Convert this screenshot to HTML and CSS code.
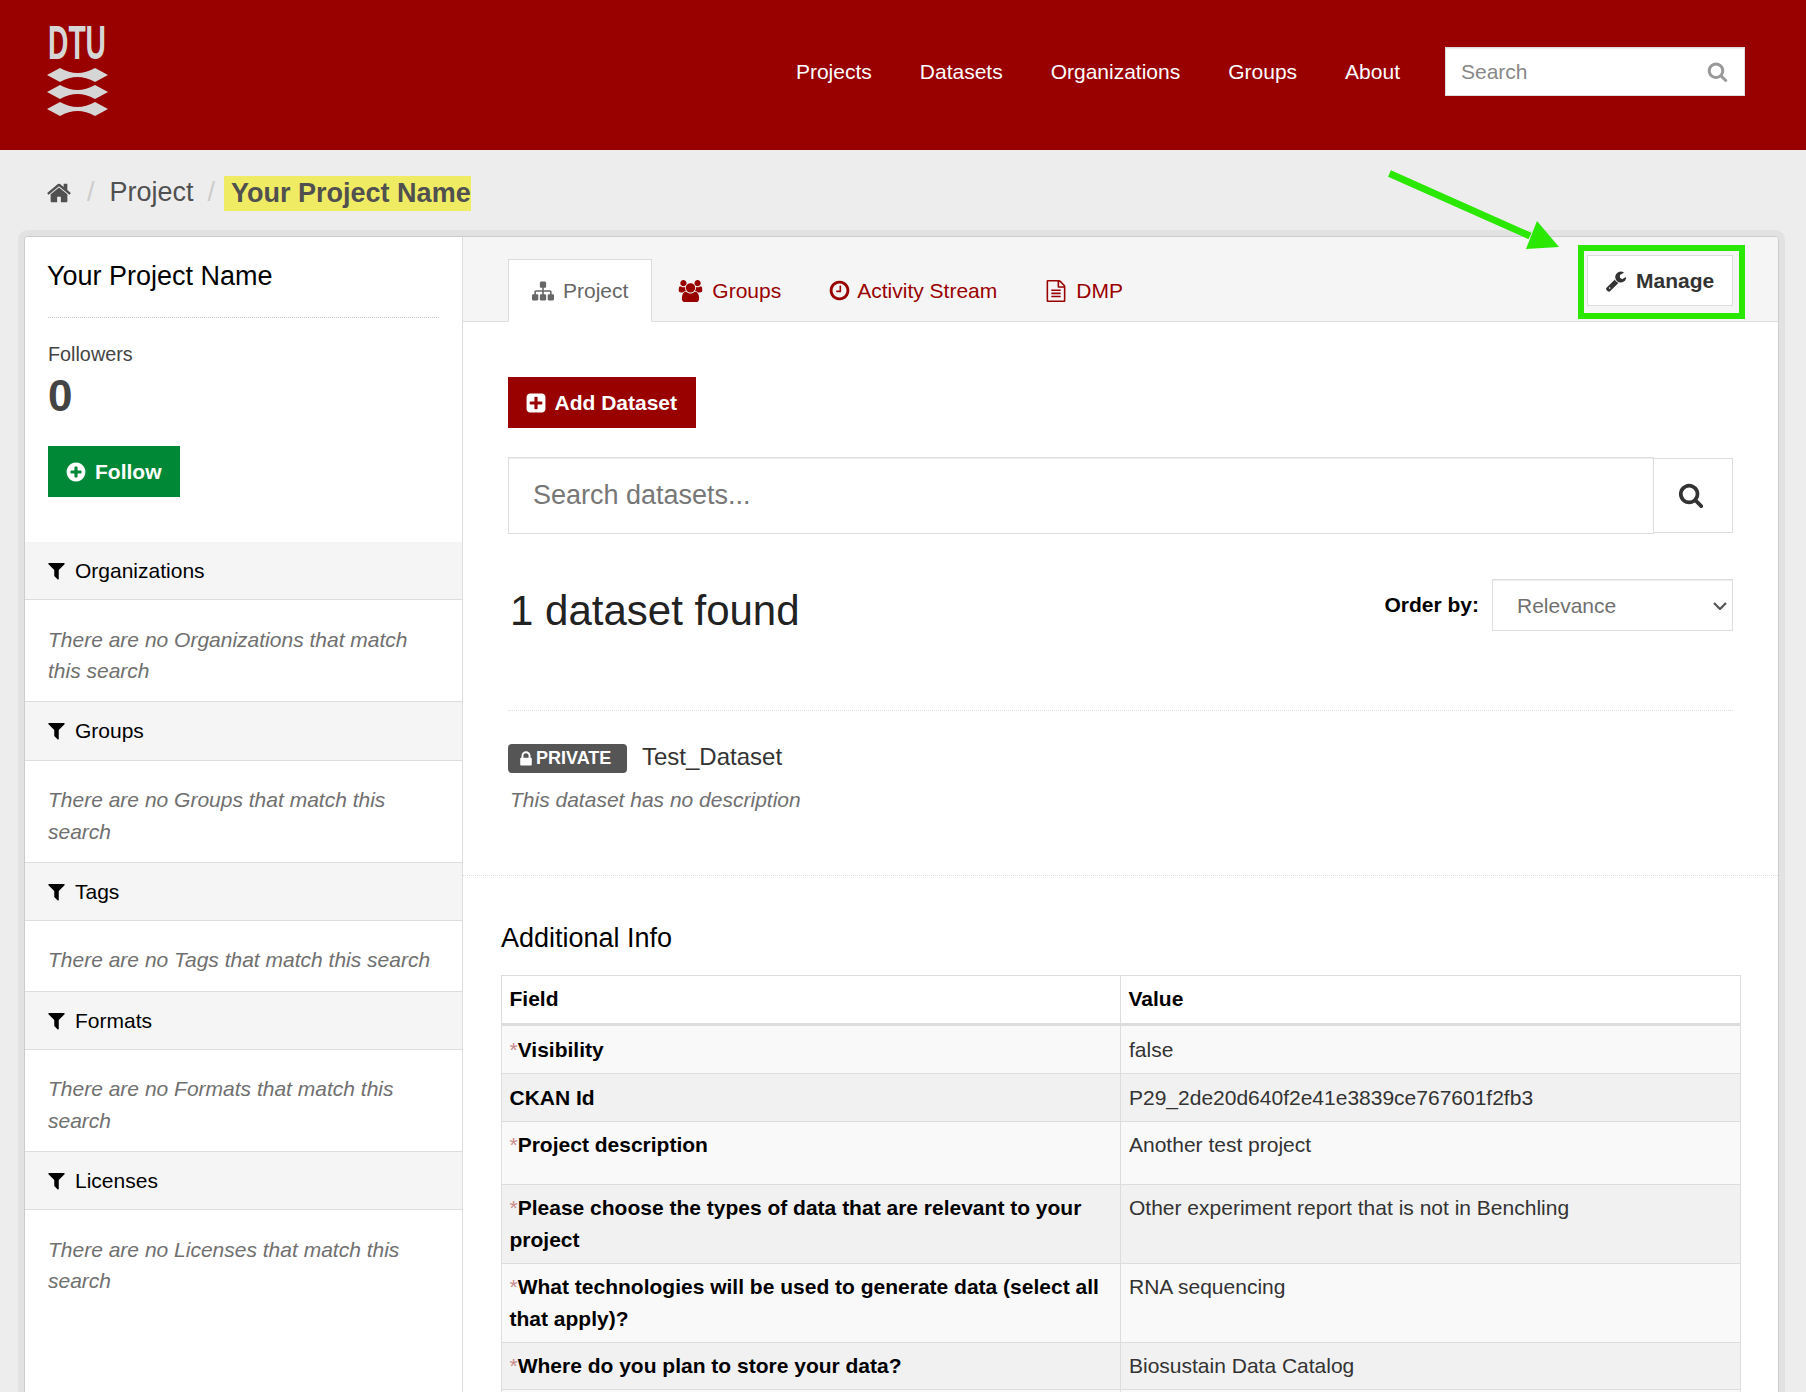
FILE: index.html
```html
<!DOCTYPE html>
<html lang="en">
<head>
<meta charset="utf-8">
<title>Your Project Name</title>
<link rel="stylesheet" href="styles.css">
</head>
<body>
<svg class="sprite" xmlns="http://www.w3.org/2000/svg">
  <symbol id="i-search" viewBox="0 0 1792 1792"><path d="M1216 832q0-185-131.5-316.5t-316.5-131.5-316.5 131.5-131.5 316.5 131.5 316.5 316.5 131.5 316.5-131.5 131.5-316.5zm512 832q0 52-38 90t-90 38q-54 0-90-38l-343-342q-179 124-399 124-143 0-273.5-55.5t-225-150-150-225-55.5-273.5 55.5-273.5 150-225 225-150 273.5-55.5 273.5 55.5 225 150 150 225 55.5 273.5q0 220-124 399l343 343q37 37 37 90z"/></symbol>
  <symbol id="i-home" viewBox="0 0 1792 1792"><path d="M1472 992v480q0 26-19 45t-45 19h-384v-384h-256v384h-384q-26 0-45-19t-19-45v-480q0-1 .5-3t.5-3l575-474 575 474q1 2 1 6zm223-69l-62 74q-8 9-21 11h-3q-13 0-21-7l-692-577-692 577q-12 8-24 7-13-2-21-11l-62-74q-8-10-7-23.5t11-21.5l719-599q32-26 76-26t76 26l244 204v-195q0-14 9-23t23-9h192q14 0 23 9t9 23v408l219 182q10 8 11 21.5t-7 23.5z"/></symbol>
  <symbol id="i-filter" viewBox="0 0 1792 1792"><path d="M1595 295q17 41-14 70l-493 493v742q0 42-39 59-13 5-25 5-27 0-45-19l-256-256q-19-19-19-45v-486l-493-493q-31-29-14-70 17-39 59-39h1280q42 0 59 39z"/></symbol>
  <symbol id="i-wrench" viewBox="0 0 1792 1792"><path d="M448 1472q0-26-19-45t-45-19-45 19-19 45 19 45 45 19 45-19 19-45zm644-420l-682 682q-37 37-90 37-52 0-91-37l-106-108q-38-36-38-90 0-53 38-91l681-681q39 98 114.5 173.5t173.5 114.5zm634-435q0 39-23 106-47 134-164.5 217.5t-258.5 83.5q-185 0-316.5-131.5t-131.5-316.5 131.5-316.5 316.5-131.5q58 0 121.5 16.5t107.5 46.5q16 11 16 28t-16 28l-293 169v224l193 107q5-3 79-48.5t135.5-81 70.5-35.5q15 0 23.5 10t8.5 25z"/></symbol>
  <symbol id="i-plus-circle" viewBox="0 0 1792 1792"><path fill-rule="evenodd" d="M1344 960v-128q0-26-19-45t-45-19h-256v-256q0-26-19-45t-45-19h-128q-26 0-45 19t-19 45v256h-256q-26 0-45 19t-19 45v128q0 26 19 45t45 19h256v256q0 26 19 45t45 19h128q26 0 45-19t19-45v-256h256q26 0 45-19t19-45zm320-64q0 209-103 385.5t-279.5 279.5-385.5 103-385.5-103-279.5-279.5-103-385.5 103-385.5 279.5-279.5 385.5-103 385.5 103 279.5 279.5 103 385.5z"/></symbol>
  <symbol id="i-plus-square" viewBox="0 0 1792 1792"><path fill-rule="evenodd" d="M1408 960v-128q0-26-19-45t-45-19h-320v-320q0-26-19-45t-45-19h-128q-26 0-45 19t-19 45v320h-320q-26 0-45 19t-19 45v128q0 26 19 45t45 19h320v320q0 26 19 45t45 19h128q26 0 45-19t19-45v-320h320q26 0 45-19t19-45zm256-544v960q0 119-84.5 203.5t-203.5 84.5h-960q-119 0-203.5-84.5t-84.5-203.5v-960q0-119 84.5-203.5t203.5-84.5h960q119 0 203.5 84.5t84.5 203.5z"/></symbol>
  <symbol id="i-lock" viewBox="0 0 1792 1792"><path d="M640 768h512v-192q0-106-75-181t-181-75-181 75-75 181v192zm832 96v576q0 40-28 68t-68 28h-960q-40 0-68-28t-28-68v-576q0-40 28-68t68-28h32v-192q0-184 132-316t316-132 316 132 132 316v192h32q40 0 68 28t28 68z"/></symbol>
  <symbol id="i-users" viewBox="0 0 1920 1792"><path d="M593 896q-162 5-265 128h-134q-82 0-138-40.5t-56-118.5q0-353 124-353 6 0 43.5 21t97.5 42.5 119 21.5q67 0 133-23-5 37-5 66 0 139 81 256zm1071 637q0 120-73 189.5t-194 69.5h-874q-121 0-194-69.5t-73-189.5q0-53 3.5-103.5t14-109 26.5-108.5 43-97.5 62-81 85.5-53.5 111.5-20q10 0 43 21.5t73 48 107 48 135 21.5 135-21.5 107-48 73-48 43-21.5q61 0 111.5 20t85.5 53.5 62 81 43 97.5 26.5 108.5 14 109 3.5 103.5zm-1024-1277q0 106-75 181t-181 75-181-75-75-181 75-181 181-75 181 75 75 181zm704 384q0 159-112.5 271.5t-271.5 112.5-271.5-112.5-112.5-271.5 112.5-271.5 271.5-112.5 271.5 112.5 112.5 271.5zm576 225q0 78-56 118.5t-138 40.5h-134q-103-123-265-128 81-117 81-256 0-29-5-66 66 23 133 23 59 0 119-21.5t97.5-42.5 43.5-21q124 0 124 353zm-128-609q0 106-75 181t-181 75-181-75-75-181 75-181 181-75 181 75 75 181z"/></symbol>
  <symbol id="i-sitemap" viewBox="0 0 1792 1792"><path d="M1792 1248v320q0 40-28 68t-68 28h-320q-40 0-68-28t-28-68v-320q0-40 28-68t68-28h96v-192h-512v192h96q40 0 68 28t28 68v320q0 40-28 68t-68 28h-320q-40 0-68-28t-28-68v-320q0-40 28-68t68-28h96v-192h-512v192h96q40 0 68 28t28 68v320q0 40-28 68t-68 28h-320q-40 0-68-28t-28-68v-320q0-40 28-68t68-28h96v-192q0-52 38-90t90-38h512v-192h-96q-40 0-68-28t-28-68v-320q0-40 28-68t68-28h320q40 0 68 28t28 68v320q0 40-28 68t-68 28h-96v192h512q52 0 90 38t38 90v192h96q40 0 68 28t28 68z"/></symbol>
  <symbol id="i-clock" viewBox="0 0 1792 1792"><path d="M1024 544v448q0 14-9 23t-23 9h-320q-14 0-23-9t-9-23v-64q0-14 9-23t23-9h224v-352q0-14 9-23t23-9h64q14 0 23 9t9 23zm416 352q0-148-73-273t-198-198-273-73-273 73-198 198-73 273 73 273 198 198 273 73 273-73 198-198 73-273zm224 0q0 209-103 385.5t-279.5 279.5-385.5 103-385.5-103-279.5-279.5-103-385.5 103-385.5 279.5-279.5 385.5-103 385.5 103 279.5 279.5 103 385.5z"/></symbol>
  <symbol id="i-file" viewBox="0 0 1792 1792"><path d="M1596 380q28 28 48 76t20 88v1152q0 40-28 68t-68 28h-1344q-40 0-68-28t-28-68v-1600q0-40 28-68t68-28h896q40 0 88 20t76 48zm-444-244v376h376q-10-29-22-41l-313-313q-12-12-41-22zm384 1528v-1024h-416q-40 0-68-28t-28-68v-416h-768v1536h1280zm-1024-864q0-14 9-23t23-9h704q14 0 23 9t9 23v64q0 14-9 23t-23 9h-704q-14 0-23-9t-9-23v-64zm736 224q14 0 23 9t9 23v64q0 14-9 23t-23 9h-704q-14 0-23-9t-9-23v-64q0-14 9-23t23-9h704zm0 256q14 0 23 9t9 23v64q0 14-9 23t-23 9h-704q-14 0-23-9t-9-23v-64q0-14 9-23t23-9h704z"/></symbol>
</svg>

<div class="page">
  <header class="masthead">
    <a class="logo" href="#" aria-label="DTU">
      <svg class="logo-svg" viewBox="0 0 110 94" width="110" height="94">
        <text class="logo-text" x="1" y="33" textLength="58" lengthAdjust="spacingAndGlyphs">DTU</text>
        <path class="logo-wave" d="M0 49 L13 42 Q22 47 30.500 47 Q39 47 48 42 L61 49 L48 56 Q39 51 30.500 51 Q22 51 13 56 Z"/>
        <path class="logo-wave" d="M0 66 L13 59 Q22 64 30.500 64 Q39 64 48 59 L61 66 L48 73 Q39 68 30.500 68 Q22 68 13 73 Z"/>
        <path class="logo-wave" d="M0 83 L13 76 Q22 81 30.500 81 Q39 81 48 76 L61 83 L48 90 Q39 85 30.500 85 Q22 85 13 90 Z"/>
      </svg>
    </a>
    <nav class="mainnav">
      <a href="#">Projects</a>
      <a href="#">Datasets</a>
      <a href="#">Organizations</a>
      <a href="#">Groups</a>
      <a href="#">About</a>
    </nav>
    <div class="sitesearch">
      <input class="sitesearch-input" type="text" placeholder="Search">
      <svg class="icon sitesearch-icon"><use href="#i-search"/></svg>
    </div>
  </header>

  <div class="crumbs">
    <svg class="icon crumb-home"><use href="#i-home"/></svg>
    <span class="crumb-sep crumb-sep-first">/</span>
    <a class="crumb-link" href="#">Project</a>
    <span class="crumb-sep crumb-sep-second">/</span>
    <strong class="crumb-current">Your Project Name</strong>
  </div>

  <div class="shell">
    <div class="shell-inner">
      <aside class="sidebar">
        <div class="side-top">
          <h1 class="side-title">Your Project Name</h1>
          <div class="followers-label">Followers</div>
          <div class="followers-count">0</div>
          <a class="btn btn-follow" href="#"><svg class="icon icon-btn"><use href="#i-plus-circle"/></svg>Follow</a>
        </div>
        <section class="facet">
          <h2 class="facet-head"><svg class="icon icon-filter"><use href="#i-filter"/></svg>Organizations</h2>
          <p class="facet-empty">There are no Organizations that match this search</p>
        </section>
        <section class="facet">
          <h2 class="facet-head"><svg class="icon icon-filter"><use href="#i-filter"/></svg>Groups</h2>
          <p class="facet-empty">There are no Groups that match this search</p>
        </section>
        <section class="facet">
          <h2 class="facet-head"><svg class="icon icon-filter"><use href="#i-filter"/></svg>Tags</h2>
          <p class="facet-empty">There are no Tags that match this search</p>
        </section>
        <section class="facet">
          <h2 class="facet-head"><svg class="icon icon-filter"><use href="#i-filter"/></svg>Formats</h2>
          <p class="facet-empty">There are no Formats that match this search</p>
        </section>
        <section class="facet">
          <h2 class="facet-head"><svg class="icon icon-filter"><use href="#i-filter"/></svg>Licenses</h2>
          <p class="facet-empty facet-empty-last">There are no Licenses that match this search</p>
        </section>
      </aside>

      <main class="main">
        <div class="tabbar">
          <ul class="tabs">
            <li class="tab tab-active"><svg class="icon icon-tab"><use href="#i-sitemap"/></svg>Project</li>
            <li class="tab"><svg class="icon icon-tab icon-users"><use href="#i-users"/></svg>Groups</li>
            <li class="tab"><svg class="icon icon-tab icon-clock"><use href="#i-clock"/></svg>Activity Stream</li>
            <li class="tab"><svg class="icon icon-tab icon-file"><use href="#i-file"/></svg>DMP</li>
          </ul>
          <a class="btn-manage" href="#"><svg class="icon icon-btn"><use href="#i-wrench"/></svg>Manage</a>
        </div>

        <div class="results">
          <a class="btn btn-add" href="#"><svg class="icon icon-btn"><use href="#i-plus-square"/></svg>Add Dataset</a>
          <div class="searchbar">
            <input class="searchbar-input" type="text" placeholder="Search datasets...">
            <button class="searchbar-btn" type="button" aria-label="Search"><svg class="icon icon-searchbar"><use href="#i-search"/></svg></button>
          </div>
          <div class="summary">
            <h2 class="summary-title">1 dataset found</h2>
            <div class="order">
              <label class="order-label" for="order">Order by:</label>
              <div class="order-field">
                <select class="order-select" id="order"><option>Relevance</option></select>
                <svg class="order-chevron" viewBox="0 0 14 8" width="14" height="8"><path d="M1 1 L7 7 L13 1"/></svg>
              </div>
            </div>
          </div>
          <div class="dataset">
            <div class="dataset-head">
              <span class="badge"><svg class="icon icon-lock"><use href="#i-lock"/></svg>PRIVATE</span>
              <a class="dataset-name" href="#">Test_Dataset</a>
            </div>
            <div class="dataset-desc">This dataset has no description</div>
          </div>
        </div>

        <div class="extra">
          <h2 class="extra-title">Additional Info</h2>
          <table class="info">
            <colgroup><col class="col-field"><col></colgroup>
            <thead>
              <tr><th>Field</th><th>Value</th></tr>
            </thead>
            <tbody>
              <tr><th><span class="req">*</span>Visibility</th><td>false</td></tr>
              <tr><th>CKAN Id</th><td>P29_2de20d640f2e41e3839ce767601f2fb3</td></tr>
              <tr class="row-tall"><th><span class="req">*</span>Project description</th><td>Another test project</td></tr>
              <tr><th><span class="req">*</span>Please choose the types of data that are relevant to your project</th><td>Other experiment report that is not in Benchling</td></tr>
              <tr><th><span class="req">*</span>What technologies will be used to generate data (select all that apply)?</th><td>RNA sequencing</td></tr>
              <tr><th><span class="req">*</span>Where do you plan to store your data?</th><td>Biosustain Data Catalog</td></tr>
              <tr><th>&nbsp;</th><td>&nbsp;</td></tr>
            </tbody>
          </table>
        </div>
      </main>
    </div>
  </div>

  <svg class="note-arrow" viewBox="0 0 180 90" width="180" height="90">
    <path d="M9.500 8.500 L150 71" />
    <polygon points="179,82 146,84 157,56" />
  </svg>
  <div class="note-box"></div>
</div>
</body>
</html>
```

FILE: styles.css
```css
* { box-sizing: border-box; }
html, body { margin: 0; padding: 0; }
body {
  background: #ededed;
  color: #333;
  font-family: "Liberation Sans", Arial, sans-serif;
  font-size: 21px;
  line-height: 31.2px;
}
a { color: inherit; text-decoration: none; }
h1, h2, p, ul { margin: 0; padding: 0; }
.sprite { display: none; }
.icon { display: block; fill: currentColor; flex: none; }

.page { position: relative; height: 1392px; overflow: hidden; }

/* Header */
.masthead {
  display: flex;
  align-items: center;
  height: 150px;
  padding: 0 61px 7px 47px;
  background: #990000;
}
.logo { display: block; align-self: flex-start; height: 94px; margin-top: 26px; }
.logo-svg { display: block; }
.logo-text {
  fill: #d6d6d6;
  font-family: "Liberation Sans", Arial, sans-serif;
  font-weight: 700;
  font-size: 48px;
}
.logo-wave { fill: #d6d6d6; }
.mainnav { display: flex; gap: 48px; margin-left: auto; color: #fff; }
.sitesearch { position: relative; margin-left: 45px; width: 300px; height: 49px; }
.sitesearch-input {
  display: block;
  width: 100%;
  height: 100%;
  padding: 0 45px 0 15px;
  border: 1px solid #ddd;
  background: #fff;
  font: inherit;
  color: #555;
  box-shadow: inset 0 1px 1px rgba(0, 0, 0, .075);
}
.sitesearch-input::placeholder { color: #888; opacity: 1; }
.sitesearch-icon {
  position: absolute;
  top: 14px;
  right: 17px;
  width: 21px;
  height: 21px;
  color: #999;
}

/* Breadcrumb */
.crumbs {
  display: flex;
  align-items: center;
  height: 80px;
  padding: 6px 0 0 47px;
  color: #505050;
  font-size: 27px;
}
.crumb-home { width: 26px; height: 26px; margin-left: -1px; }
.crumb-sep { color: #ccc; }
.crumb-sep-first { margin: 0 15px; }
.crumb-sep-second { margin: 0 9px 0 14px; }
.crumb-current {
  display: block;
  height: 35px;
  padding: 0 0 0 7px;
  background: #efec63;
  line-height: 35px;
}

/* Shell */
.shell {
  margin: 0 21px 0 18px;
  border: 6px solid #e2e2e2;
  border-bottom: 0;
  border-radius: 10px 10px 0 0;
}
.shell-inner {
  display: flex;
  height: 1156px;
  border: 1px solid #ccc;
  border-bottom: 0;
  border-radius: 4px 4px 0 0;
  overflow: hidden;
  background: #fff;
}

/* Sidebar */
.sidebar { flex: none; width: 438px; border-right: 1px solid #ddd; background: #fff; }
.side-top { padding: 0 23px 45px; }
.side-title {
  padding: 23px 0 24px;
  border-bottom: 1px dotted #ccc;
  color: #000;
  font-size: 27px;
  font-weight: 400;
  line-height: 33px;
  text-indent: -1px;
}
.followers-label { margin-top: 21px; font-size: 19.800px; line-height: 31px; color: #444; }
.followers-count {
  margin-top: 3px;
  color: #444;
  font-size: 44px;
  font-weight: 700;
  line-height: 46px;
}
.btn {
  display: inline-flex;
  align-items: center;
  height: 51px;
  color: #fff;
  font-weight: 700;
}
.icon-btn { width: 22px; height: 22px; }
.btn-follow { margin-top: 27px; padding: 0 18px 0 17px; gap: 8px; background: #008837; }
.facet-head {
  display: flex;
  align-items: center;
  padding: 13px 23px;
  border-bottom: 1px solid #ddd;
  background: #f5f5f5;
  color: #000;
  font-size: 21px;
  font-weight: 400;
  line-height: 31.2px;
}
.icon-filter { width: 21px; height: 21px; margin-right: 8.500px; margin-left: -2.500px; }
.facet-empty {
  padding: 23.500px 23px 14.500px;
  border-bottom: 1px solid #ddd;
  color: #707070;
  font-style: italic;
  line-height: 31.600px;
}
.facet-empty-last { border-bottom: 0; }

/* Main */
.main { flex: 1; min-width: 0; background: #fff; }
.tabbar {
  display: flex;
  justify-content: space-between;
  align-items: flex-start;
  height: 85px;
  padding: 0 45px;
  border-bottom: 1px solid #ddd;
  background: #f5f5f5;
}
.tabs { display: flex; gap: 2px; margin-top: 22px; list-style: none; }
.tab {
  display: flex;
  align-items: center;
  height: 63px;
  padding: 0 23px;
  border: 1px solid transparent;
  color: #990000;
}
.tab-active { border-color: #ddd #ddd #fff; background: #fff; color: #666; }
.icon-tab { width: 22px; height: 22px; margin-right: 9px; }
.icon-users { width: 25px; margin-right: 9px; }
.icon-clock { width: 23px; height: 23px; margin-left: -3px; margin-right: 6px; }
.icon-file { width: 22px; height: 22px; margin-left: -2px; margin-right: 9px; }
.btn-manage {
  display: flex;
  align-items: center;
  gap: 9px;
  width: 146px;
  height: 51px;
  margin-top: 18px;
  padding: 0 0 0 17px;
  border: 1px solid #ddd;
  background: #fff;
  color: #333;
  font-weight: 700;
}

.results { padding: 55px 45px 0; }
.btn-add { gap: 7.500px; padding: 0 19px 0 17px; background: #990000; }
.searchbar { display: flex; align-items: center; margin-top: 29px; }
.searchbar-input {
  flex: 1;
  min-width: 0;
  height: 77px;
  padding: 0 24px;
  border: 1px solid #ddd;
  background: #fff;
  color: #555;
  font-family: inherit;
  font-size: 27px;
  box-shadow: inset 0 1px 1px rgba(0, 0, 0, .075);
}
.searchbar-input::placeholder { color: #777; opacity: 1; }
.searchbar-btn {
  display: flex;
  align-items: center;
  justify-content: center;
  flex: none;
  width: 80px;
  height: 75px;
  margin-left: -1px;
  padding: 0 5px 2px 0;
  border: 1px solid #ddd;
  background: #fff;
  color: #333;
}
.icon-searchbar { width: 26px; height: 26px; }
.summary {
  display: flex;
  justify-content: space-between;
  align-items: flex-start;
  margin-top: 45px;
  padding: 0 0 68px 2px;
  border-bottom: 1px dotted #ddd;
}
.summary-title { margin-top: 1px; color: #222; font-size: 42px; font-weight: 400; line-height: 62px; }
.order { display: flex; align-items: center; gap: 13px; }
.order-label { color: #000; font-weight: 700; margin-top: -1px; }
.order-field { position: relative; width: 241px; height: 52px; }
.order-select {
  display: block;
  width: 100%;
  height: 100%;
  padding: 0 40px 0 24px;
  border: 1px solid #ddd;
  border-radius: 0;
  appearance: none;
  background: #fff;
  color: #707070;
  font-family: inherit;
  font-size: 21px;
  box-shadow: inset 0 1px 1px rgba(0, 0, 0, .075);
}
.order-chevron {
  position: absolute;
  top: 23px;
  right: 6px;
  fill: none;
  stroke: #555;
  stroke-width: 2.200px;
}
.dataset { padding: 33px 0 60px; }
.dataset-head { display: flex; align-items: center; gap: 15px; height: 29px; }
.badge {
  display: flex;
  align-items: center;
  gap: 1px;
  width: 119px;
  height: 29px;
  padding-left: 9px;
  border-radius: 4px;
  background: #555;
  color: #fff;
  font-size: 18px;
  font-weight: 700;
}
.icon-lock { width: 18px; height: 18px; }
.dataset-name { color: #333; font-size: 24px; margin-top: -4px; }
.dataset-desc { margin-top: 11px; padding-left: 2px; color: #707070; font-style: italic; }

.extra { padding: 46px 37px 0 38px; border-top: 1px dotted #ddd; }
.extra-title { color: #000; font-size: 27px; font-weight: 400; line-height: 33px; }
.info {
  width: 100%;
  margin-top: 20px;
  border-collapse: collapse;
  table-layout: fixed;
  background: #fff;
}
.col-field { width: 619px; }
.info th, .info td {
  padding: 7.800px 8px;
  border: 1px solid #ddd;
  text-align: left;
  vertical-align: top;
  line-height: 31.2px;
}
.info th { padding-left: 7.500px; color: #000; font-weight: 700; }
.info td { color: #333; }
.info thead th { padding-top: 7px; padding-bottom: 8.600px; border-bottom-width: 3px; }
.info tbody tr:nth-child(odd) th, .info tbody tr:nth-child(odd) td { background: #f9f9f9; }
.info tbody tr:nth-child(even) th, .info tbody tr:nth-child(even) td { background: #f1f1f1; }
.info .row-tall th, .info .row-tall td { padding-bottom: 23px; }
.req { color: #c98a8a; font-weight: 400; }

/* Annotations drawn on top of the screenshot */
.note-arrow { position: absolute; left: 1380px; top: 165px; }
.note-arrow path { fill: none; stroke: #2ae800; stroke-width: 7; }
.note-arrow polygon { fill: #2ae800; }
.note-box {
  position: absolute;
  left: 1578px;
  top: 245px;
  width: 167px;
  height: 74px;
  border: 6px solid #2ae800;
  pointer-events: none;
}
```
